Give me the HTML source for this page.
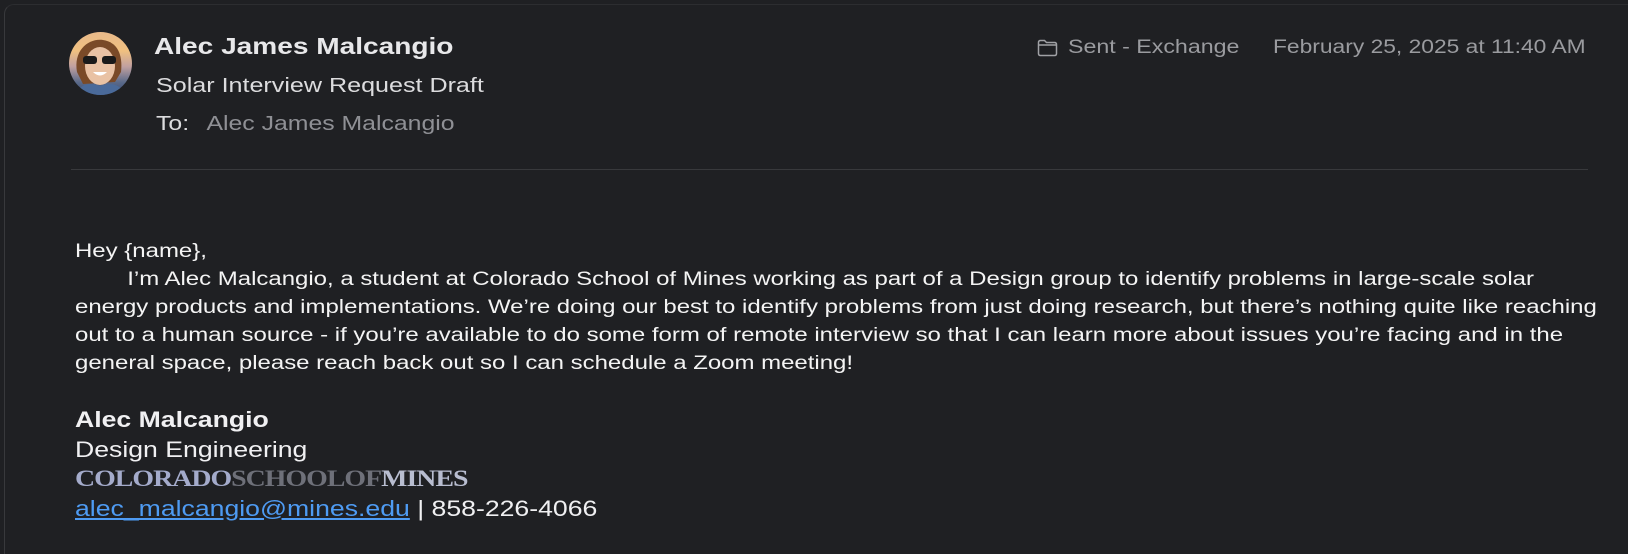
<!DOCTYPE html>
<html><head><meta charset="utf-8"><style>
html,body{margin:0;padding:0;background:#1f2023;width:1628px;height:554px;overflow:hidden}
body{font-family:"Liberation Sans",Arial,sans-serif;position:relative}
.frame{position:absolute;left:4px;top:4px;width:1624px;height:550px;box-sizing:border-box;border-left:1px solid #38393c;border-top:1px solid #2c2d30;border-radius:10px 0 0 0}
.abs{position:absolute;white-space:nowrap}
.sx{transform:scaleX(1.22);transform-origin:0 0}
.av{left:69px;top:32px;width:63px;height:63px;border-radius:50%;overflow:hidden;background:linear-gradient(180deg,#e8b98a 0%,#f0c080 30%,#c0a0a0 55%,#5a6a8a 80%,#3a4a70 100%)}
.name{left:154px;top:33px;font-size:23px;font-weight:bold;color:#e8e8ea}
.subj{left:156px;top:75px;font-size:20px;color:#dcdcde;transform:scaleX(1.255)!important}
.to{left:156px;top:113px;font-size:20px;color:#dcdcde;transform:scaleX(1.24)!important}
.to span{color:#8f9095;margin-left:14px}
.meta{top:37px;font-size:19px;color:#9a9b9f}
.sep{left:71px;top:169px;width:1517px;height:1px;background:#38393c}
.body{left:75px;top:238px;font-size:19.3px;line-height:28px;color:#f4f4f4;transform:scaleX(1.243)!important}
.sig{left:75px;top:405px;font-size:22px;line-height:29.5px;color:#f0f0f2;transform:scaleX(1.21)!important}
a{color:#4e9bf3;text-decoration:underline}
.logo{font-family:"Liberation Serif",serif;font-weight:bold;font-size:23px;letter-spacing:-0.8px}
</style></head><body>
<div class="frame"></div>
<div class="abs av">
<svg width="63" height="63" viewBox="0 0 63 63">
<path d="M8 40 C4 18 20 6 34 8 C48 10 54 22 52 40 L46 50 L14 52 Z" fill="#7a4a28"/>
<ellipse cx="31" cy="34" rx="15" ry="19" fill="#e9c2a4"/>
<rect x="14" y="24" width="14" height="8" rx="3" fill="#1a1a1a"/>
<rect x="33" y="24" width="14" height="8" rx="3" fill="#1a1a1a"/>
<path d="M24 40 Q31 47 38 40 Z" fill="#fff"/>
<path d="M8 63 C10 52 20 50 31 54 C42 50 52 52 56 63 Z" fill="#4a6a9a"/>
</svg></div>
<div class="abs name sx">Alec James Malcangio</div>
<div class="abs subj sx">Solar Interview Request Draft</div>
<div class="abs to sx">To:<span>Alec James Malcangio</span></div>
<svg class="abs" style="left:1037px;top:39px" width="21" height="18" viewBox="0 0 21 18"><path d="M1.5 3.5 Q1.5 1.5 3.5 1.5 L7.5 1.5 L9.5 3.5 L17.5 3.5 Q19.5 3.5 19.5 5.5 L19.5 14.5 Q19.5 16.5 17.5 16.5 L3.5 16.5 Q1.5 16.5 1.5 14.5 Z M1.5 6 L19.5 6" fill="none" stroke="#a0a1a5" stroke-width="1.5"/></svg>
<div class="abs meta sx" style="left:1068px">Sent - Exchange</div>
<div class="abs meta sx" style="left:1273px;transform:scaleX(1.2)">February 25, 2025 at 11:40 AM</div>
<div class="abs sep"></div>
<div class="abs body sx">Hey {name},<br><span style="display:inline-block;width:42px"></span>I’m Alec Malcangio, a student at Colorado School of Mines working as part of a Design group to identify problems in large-scale solar<br>energy products and implementations. We’re doing our best to identify problems from just doing research, but there’s nothing quite like reaching<br>out to a human source - if you’re available to do some form of remote interview so that I can learn more about issues you’re facing and in the<br>general space, please reach back out so I can schedule a Zoom meeting!</div>
<div class="abs sig sx"><b>Alec Malcangio</b><br>Design Engineering<br><span class="logo"><span style="color:#a4abcb">COLORADO</span><span style="color:#6e7079">SCHOOLOF</span><span style="color:#b8bdd0">MINES</span></span><br><a>alec_malcangio@mines.edu</a> | 858-226-4066</div>
</body></html>
